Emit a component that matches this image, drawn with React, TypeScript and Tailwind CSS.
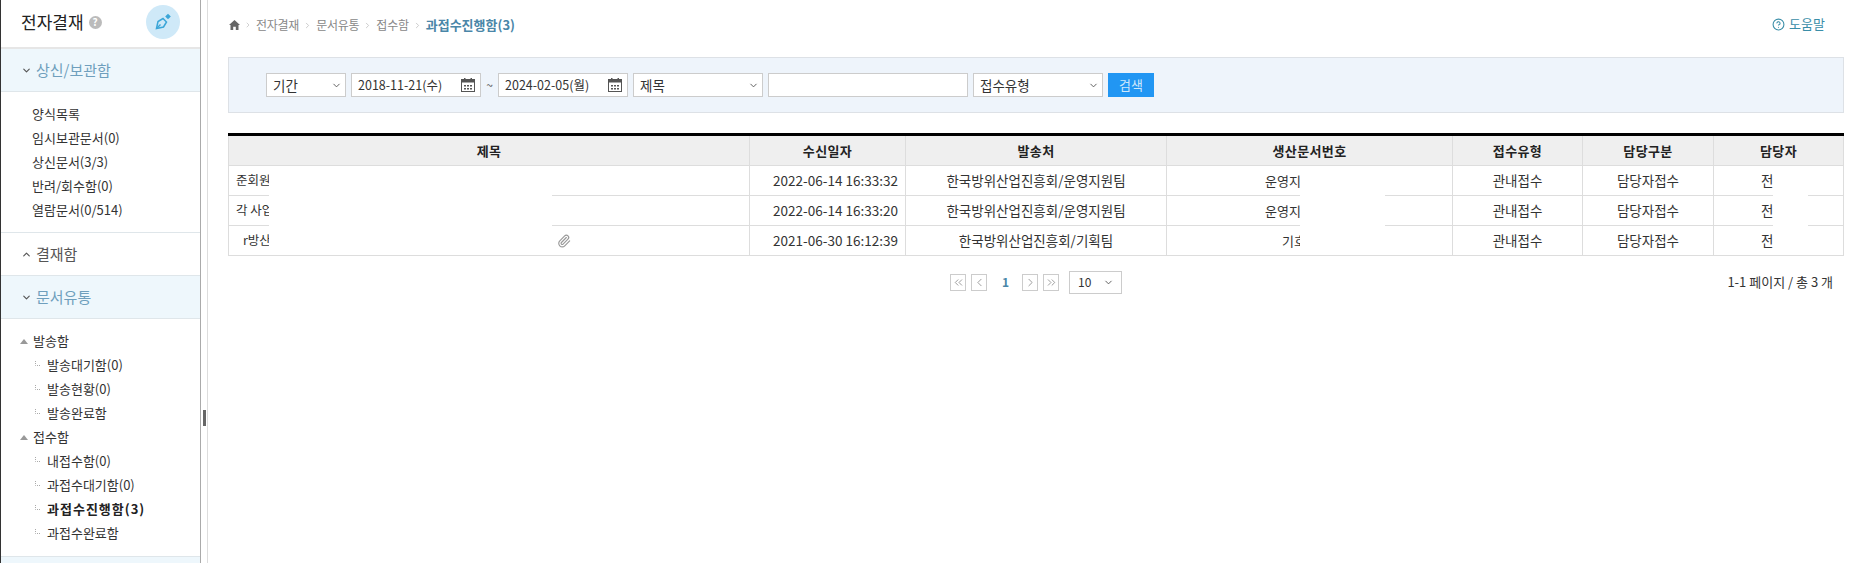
import React from "react";
import { ChevronDown, ChevronUp, Paperclip, ChevronLeft, ChevronRight, ChevronsLeft, ChevronsRight, CircleHelp } from "lucide-react";

const font = "font-['Noto_Sans_CJK_KR','Liberation_Sans',sans-serif]";

const rows = [
  { title: "준회원", date: "2022-06-14 16:33:32", from: "한국방위산업진흥회/운영지원팀", no: "운영지", noPad: "pl-[98px]", clip: false },
  { title: "각 사업", date: "2022-06-14 16:33:20", from: "한국방위산업진흥회/운영지원팀", no: "운영지", noPad: "pl-[98px]", clip: false },
  { title: "r방산", date: "2021-06-30 16:12:39", from: "한국방위산업진흥회/기획팀", no: "기호", noPad: "pl-[115px]", clip: true },
];

const SectionHead = ({ label, open }: { label: string; open?: boolean }) => (
  <div
    className={`flex h-[43px] shrink-0 items-center gap-[4px] border-b border-[#dfe6ea] pl-[20px] text-[15px] ${
      open ? "bg-[#eef7fc] text-[#6f9fbd]" : "bg-white text-[#555]"
    }`}
  >
    {open ? <ChevronDown size={11} strokeWidth={2.5} className="text-[#555]" /> : <ChevronUp size={11} strokeWidth={2.5} className="text-[#555]" />}
    <span>{label}</span>
  </div>
);

const Branch = () => (
  <svg width="5" height="5" viewBox="0 0 5 5" className="mr-[7px] mb-[4px] shrink-0">
    <path d="M0.5 0v4.5H5" fill="none" stroke="#aaa" strokeDasharray="1 1" />
  </svg>
);

const Folder = ({ label }: { label: string }) => (
  <div className="flex h-[24px] items-center pl-[19px]">
    <svg width="8" height="5" viewBox="0 0 8 5" className="mr-[5px]">
      <polygon points="4,0 8,5 0,5" fill="#999" />
    </svg>
    <span>{label}</span>
  </div>
);

const Leaf = ({ label, bold }: { label: string; bold?: boolean }) => (
  <div className="flex h-[24px] items-center pl-[34px]">
    <Branch />
    <span className={bold ? "font-bold tracking-[1px] text-[#222]" : ""}>{label}</span>
  </div>
);

const Calendar = () => (
  <svg width="14" height="14" viewBox="0 0 14 14" className="shrink-0">
    <rect x="0.5" y="1.5" width="13" height="12" fill="#fff" stroke="#555" />
    <rect x="0.5" y="1.5" width="13" height="3" fill="#555" />
    <rect x="3" y="0" width="1.5" height="3" fill="#555" />
    <rect x="9.5" y="0" width="1.5" height="3" fill="#555" />
    <path d="M3 7h2v1.5H3zM6 7h2v1.5H6zM9 7h2v1.5H9zM3 10h2v1.5H3zM6 10h2v1.5H6zM9 10h2v1.5H9z" fill="#555" />
  </svg>
);

const SelectBox = ({ label, w }: { label: string; w: string }) => (
  <div className={`flex h-[24px] shrink-0 items-center justify-between border border-[#ccc] bg-white pr-[3px] pl-[6px] text-[13.5px] text-[#333] ${w}`}>
    <span>{label}</span>
    <ChevronDown size={11} strokeWidth={2} className="text-[#555]" />
  </div>
);

const DateBox = ({ value }: { value: string }) => (
  <div className="flex h-[24px] w-[130px] shrink-0 items-center justify-between border border-[#ccc] bg-white pr-[5px] pl-[6px] text-[12.5px] text-[#333]">
    <span>{value}</span>
    <Calendar />
  </div>
);

const PageBtn = ({ children }: { children: React.ReactNode }) => (
  <div className="flex h-[17px] w-[16px] items-center justify-center border border-[#ccc] text-[#888]">{children}</div>
);

const Sidebar = () => (
  <aside className="flex h-full w-[201px] shrink-0 flex-col overflow-hidden border-r border-l border-r-[#aaa] border-l-[#333] text-[13px] text-[#333]">
    <div className="flex h-[49px] shrink-0 items-center justify-between border-b-2 border-[#e6e6e6] pr-[20px] pb-[3px] pl-[20px]">
      <div className="flex items-center gap-[5px]">
        <span className="text-[17px] text-[#222]">전자결재</span>
        <span className="flex h-[13px] w-[13px] items-center justify-center rounded-full bg-[#bbb] text-[10px] leading-none font-bold text-white">?</span>
      </div>
      <div className="flex h-[34px] w-[34px] items-center justify-center rounded-full bg-[#cfe9f8]">
        <svg width="18" height="18" viewBox="0 0 18 18" fill="none" stroke="#3ba6d8" strokeWidth="1.5">
          <path d="M2.5 15.5l1.5-7 5-3 3.5 3.5-3 5z" />
          <path d="M2.5 15.5l4-4" />
          <rect x="12" y="1.5" width="4" height="4" transform="rotate(45 14 3.5)" fill="#3ba6d8" stroke="none" />
        </svg>
      </div>
    </div>
    <SectionHead label="상신/보관함" open />
    <div className="flex flex-col py-[10px] pl-[31px] leading-[24px]">
      <span>양식목록</span>
      <span>임시보관문서(0)</span>
      <span>상신문서(3/3)</span>
      <span>반려/회수함(0)</span>
      <span>열람문서(0/514)</span>
    </div>
    <div className="border-t border-[#dfe6ea]">
      <SectionHead label="결재함" />
    </div>
    <SectionHead label="문서유통" open />
    <div className="flex flex-col pt-[10px] pb-[11px]">
      <Folder label="발송함" />
      <Leaf label="발송대기함(0)" />
      <Leaf label="발송현황(0)" />
      <Leaf label="발송완료함" />
      <Folder label="접수함" />
      <Leaf label="내접수함(0)" />
      <Leaf label="과접수대기함(0)" />
      <Leaf label="과접수진행함(3)" bold />
      <Leaf label="과접수완료함" />
    </div>
    <div className="h-[10px] shrink-0 border-t border-[#dfe6ea] bg-[#eef7fc]" />
  </aside>
);

const th = "border-r border-[#ddd] bg-[#efefef] font-bold text-[13px] tracking-[0.4px] text-[#222]";
const td = "border-r border-t border-[#ddd] text-center";

export default function App() {
  return (
    <div className={`flex h-[563px] w-[1851px] overflow-hidden bg-white ${font}`}>
      <Sidebar />
      <div className="flex h-full w-[7px] shrink-0 items-center border-r border-[#ddd] pl-[2px]">
        <div className="mt-[272px] h-[16px] w-[3px] bg-[#666]" />
      </div>
      <main className="flex-1 pr-[7px] pl-[20px]">
        <div className="flex h-[57px] items-start justify-between pt-[16px] text-[12px]">
          <div className="mt-[1px] ml-[1px] flex h-[16px] items-center gap-[4px] tracking-[-0.25px] text-[#888]">
            <svg width="11" height="10" viewBox="0 0 11 10">
              <path d="M5.5 0L11 5H9.5v5H6.8V6.8H4.2V10H1.5V5H0z" fill="#666" />
            </svg>
            <ChevronRight size={8} className="text-[#bbb]" />
            <span>전자결재</span>
            <ChevronRight size={9} className="text-[#bbb]" />
            <span>문서유통</span>
            <ChevronRight size={9} className="text-[#bbb]" />
            <span>접수함</span>
            <ChevronRight size={9} className="text-[#bbb]" />
            <span className="text-[13px] font-bold tracking-normal text-[#4a86a8]">과접수진행함(3)</span>
          </div>
          <div className="mr-[19px] flex h-[16px] items-center gap-[4px] text-[13px] text-[#3a8ea8]">
            <CircleHelp size={13} />
            <span>도움말</span>
          </div>
        </div>

        <div className="flex h-[56px] items-center gap-[5px] border border-[#dde1e6] bg-[#eef4fb] pl-[37px]">
          <SelectBox label="기간" w="w-[80px]" />
          <DateBox value="2018-11-21(수)" />
          <span className="w-[7px] text-center text-[12px] text-[#555]">~</span>
          <DateBox value="2024-02-05(월)" />
          <SelectBox label="제목" w="w-[130px]" />
          <div className="h-[24px] w-[200px] shrink-0 border border-[#ccc] bg-white" />
          <SelectBox label="접수유형" w="w-[130px]" />
          <div className="flex h-[24px] w-[46px] shrink-0 items-center justify-center bg-[#2196f3] text-[13px] text-[#cfe8fb]">검색</div>
        </div>

        <div className="relative mt-[20px]">
          <table className="w-full table-fixed border-collapse border-t-[3px] border-b border-l border-[#ddd] border-t-black text-[13.5px] text-[#333]">
            <colgroup>
              <col className="w-[521px]" />
              <col className="w-[156px]" />
              <col className="w-[261px]" />
              <col className="w-[286px]" />
              <col className="w-[130px]" />
              <col className="w-[131px]" />
              <col />
            </colgroup>
            <thead>
              <tr className="h-[31px]">
                {["제목", "수신일자", "발송처", "생산문서번호", "접수유형", "담당구분", "담당자"].map((h) => (
                  <th key={h} className={th}>{h}</th>
                ))}
              </tr>
            </thead>
            <tbody>
              {rows.map((r) => (
                <tr key={r.date} className="h-[30px]">
                  <td className="border-t border-r border-[#ddd] pl-[7px] text-left text-[12.5px]">
                    <div className="flex items-center">
                      <span className={r.clip ? "pl-[7px]" : ""}>{r.title}</span>
                      {r.clip && <Paperclip size={14} className="mr-[178px] ml-auto text-[#999]" />}
                    </div>
                  </td>
                  <td className="border-t border-r border-[#ddd] pl-[16px] text-center">{r.date}</td>
                  <td className={td}>{r.from}</td>
                  <td className={`border-t border-r border-[#ddd] text-left text-[13px] ${r.noPad}`}>{r.no}</td>
                  <td className={td}>관내접수</td>
                  <td className={td}>담당자접수</td>
                  <td className="border-t border-r border-[#ddd] pl-[47px] text-left">전</td>
                </tr>
              ))}
            </tbody>
          </table>
          {/* white patches hiding names in the source screenshot */}
          <div className="absolute top-[34px] left-[41px] h-[88px] w-[283px] bg-white" />
          <div className="absolute top-[34px] left-[1072px] h-[88px] w-[85px] bg-white" />
          <div className="absolute top-[34px] left-[1545px] h-[88px] w-[35px] bg-white" />
        </div>

        <div className="relative mt-[14px] flex h-[24px] items-center justify-center text-[12px]">
          <div className="flex items-center">
            <PageBtn><ChevronsLeft size={13} strokeWidth={1.5} /></PageBtn>
            <div className="ml-[5px]"><PageBtn><ChevronLeft size={13} strokeWidth={1.5} /></PageBtn></div>
            <span className="mx-[15px] w-[5px] text-center font-bold text-[#4a86a8]">1</span>
            <PageBtn><ChevronRight size={13} strokeWidth={1.5} /></PageBtn>
            <div className="ml-[5px]"><PageBtn><ChevronsRight size={13} strokeWidth={1.5} /></PageBtn></div>
            <div className="ml-[10px] flex h-[23px] w-[53px] items-center justify-between border border-[#ccc] pr-[7px] pl-[8px] text-[#333]">
              <span>10</span>
              <ChevronDown size={11} strokeWidth={2} className="text-[#555]" />
            </div>
          </div>
          <span className="absolute right-[11px] text-[13px] text-[#333]">1-1 페이지 / 총 3 개</span>
        </div>
      </main>
    </div>
  );
}
